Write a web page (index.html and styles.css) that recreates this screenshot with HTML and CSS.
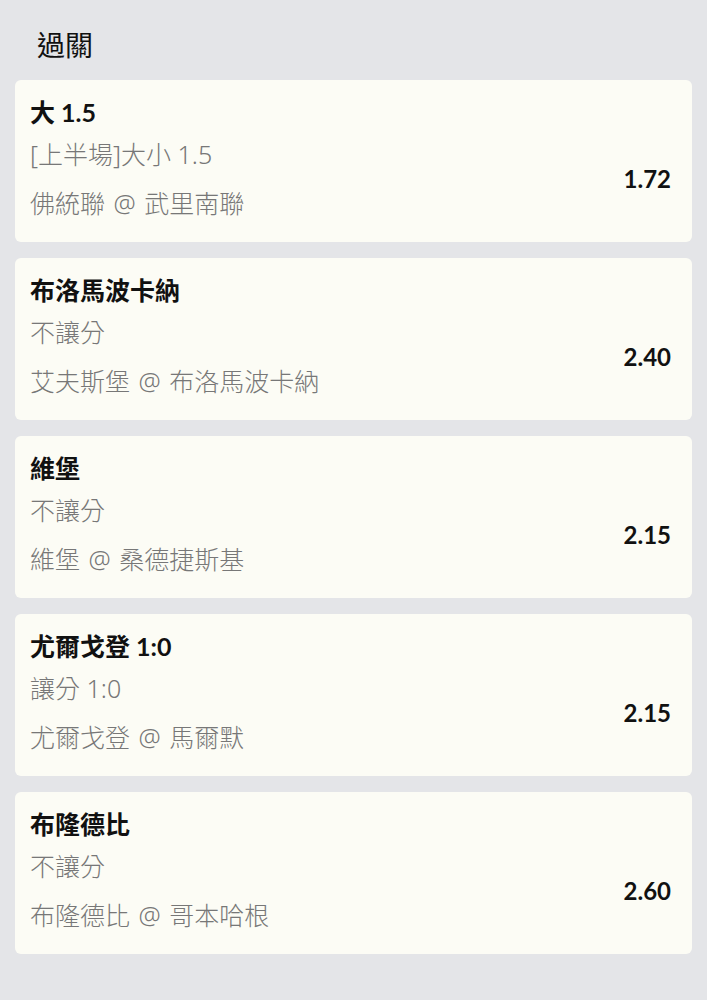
FILE: index.html
```html
<!DOCTYPE html>
<html lang="zh-Hant">

<head>
    <meta charset="UTF-8">
    <title>過關</title>
    <link rel="stylesheet" href="styles.css">
</head>

<body>
    <main>
        <h1 class="titel">過關</h1>
        <section class="liste">
            <article class="kort">
                <h2>大 1.5</h2>
                <div class="raekke">
                    <div class="info">
                        <p class="marked">[上半場]大小 1.5</p>
                        <p class="kamp">佛統聯 @ 武里南聯</p>
                    </div>
                    <p class="odds">1.72</p>
                </div>
            </article>
            <article class="kort">
                <h2>布洛馬波卡納</h2>
                <div class="raekke">
                    <div class="info">
                        <p class="marked">不讓分</p>
                        <p class="kamp">艾夫斯堡 @ 布洛馬波卡納</p>
                    </div>
                    <p class="odds">2.40</p>
                </div>
            </article>
            <article class="kort">
                <h2>維堡</h2>
                <div class="raekke">
                    <div class="info">
                        <p class="marked">不讓分</p>
                        <p class="kamp">維堡 @ 桑德捷斯基</p>
                    </div>
                    <p class="odds">2.15</p>
                </div>
            </article>
            <article class="kort">
                <h2>尤爾戈登 1:0</h2>
                <div class="raekke">
                    <div class="info">
                        <p class="marked">讓分 1:0</p>
                        <p class="kamp">尤爾戈登 @ 馬爾默</p>
                    </div>
                    <p class="odds">2.15</p>
                </div>
            </article>
            <article class="kort">
                <h2>布隆德比</h2>
                <div class="raekke">
                    <div class="info">
                        <p class="marked">不讓分</p>
                        <p class="kamp">布隆德比 @ 哥本哈根</p>
                    </div>
                    <p class="odds">2.60</p>
                </div>
            </article>
        </section>
    </main>
</body>

</html>
```

FILE: styles.css
```css
* {
    box-sizing: border-box;
    padding: 0;
    margin: 0;
}

body {
    font-family: Lato, "Noto Sans CJK TC", sans-serif;
    background: #e4e5e8;
    color: #111;
}

main {
    padding: 0 15px;
}

.titel {
    font-family: "Noto Sans CJK TC", sans-serif;
    font-size: 28px;
    font-weight: 400;
    line-height: 36px;
    padding: 26px 0 18px 22px;
}

.liste {
    display: flex;
    flex-direction: column;
    gap: 16px;
}

.kort {
    background: #fcfcf5;
    border-radius: 6px;
    padding: 12px 21px 19px 15px;
}

.kort h2 {
    font-size: 25px;
    font-weight: 700;
    line-height: 40px;
    margin-bottom: 2px;
}

.raekke {
    display: flex;
    align-items: center;
    justify-content: space-between;
}

.marked,
.kamp {
    font-family: "Noto Sans", "Noto Sans CJK TC", sans-serif;
    font-size: 25px;
    font-weight: 300;
    line-height: 40px;
    color: #777;
}

.kamp {
    margin-top: 9px;
    word-spacing: 2px;
}

.odds {
    font-size: 24px;
    font-weight: 700;
}
```
